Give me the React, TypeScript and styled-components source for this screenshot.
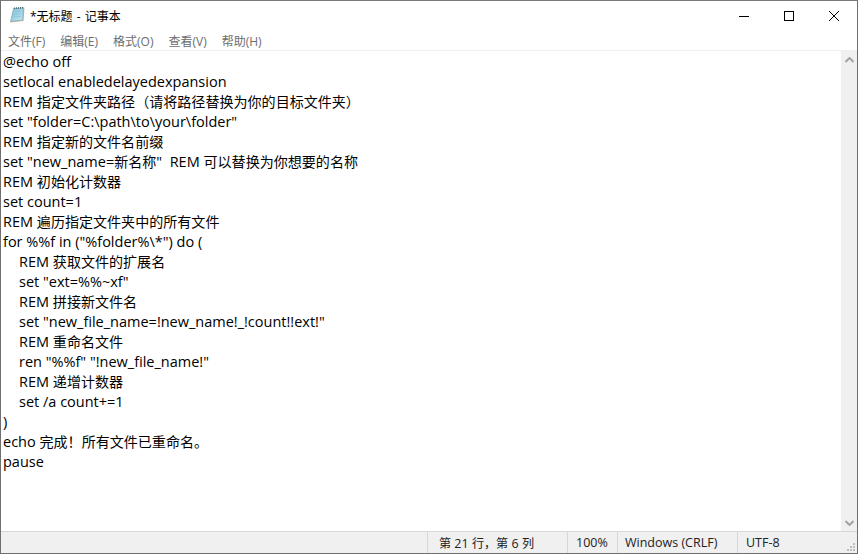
import React from "react";
import styled, { createGlobalStyle } from "styled-components";

const Global = createGlobalStyle`
  html, body {
    margin: 0;
    padding: 0;
    background: #fff;
  }
`;

const Win = styled.div`
  width: 858px;
  height: 554px;
  box-sizing: border-box;
  border: 1px solid #6f6f6f;
  border-top-color: #7a7a7a;
  background: #fff;
  display: flex;
  flex-direction: column;
  overflow: hidden;
  font-family: "Open Sans", "Noto Sans CJK SC", sans-serif;
`;

const TitleBar = styled.div`
  height: 30px;
  display: flex;
  align-items: center;
  padding: 0 1px 0 8px;
  flex: none;
`;

const AppIcon = styled.svg`
  margin-bottom: 2px;
  flex: none;
`;

const Title = styled.div`
  font-size: 12px;
  word-spacing: 1px;
  color: #000;
  margin-left: 5px;
  flex: 1;
`;

const WinBtn = styled.div`
  width: 45px;
  height: 30px;
  display: flex;
  align-items: center;
  justify-content: center;
`;

const MenuBar = styled.div`
  height: 19px;
  display: flex;
  align-items: center;
  padding-left: 7px;
  gap: 15px;
  flex: none;
  border-bottom: 1px solid #f0f0f0;
`;

const MenuItem = styled.span`
  font-size: 12px;
  color: #6d6d6d;
`;

const Body = styled.div`
  flex: 1;
  display: flex;
  min-height: 0;
`;

const Editor = styled.div`
  flex: 1;
  padding: 1px 0 0 2px;
  font-size: 14.5px;
  line-height: 20px;
  color: #000;
  white-space: pre;
`;

const Line = styled.div<{ $indent?: boolean }>`
  height: 20px;
  padding-left: ${(p) => (p.$indent ? 16 : 0)}px;
`;

const Cjk = styled.span`
  font-size: 0.97em;
`;

const ScrollBar = styled.div`
  width: 16px;
  background: #f0f0f0;
  display: flex;
  flex-direction: column;
  justify-content: space-between;
  flex: none;
`;

const ScrollBtn = styled.div`
  height: 17px;
  display: flex;
  align-items: center;
  justify-content: center;
`;

const StatusBar = styled.div`
  height: 22px;
  box-sizing: border-box;
  flex: none;
  display: flex;
  background: #f0f0f0;
  border-top: 1px solid #d7d7d7;
  font-size: 12.5px;
  color: #222;
  position: relative;
`;

const StatusSpacer = styled.div`
  flex: 1;
`;

const StatusCell = styled.div<{ $w: number; $pad: number }>`
  width: ${(p) => p.$w}px;
  box-sizing: border-box;
  padding-left: ${(p) => p.$pad}px;
  border-left: 1px solid #d7d7d7;
  display: flex;
  align-items: center;
  white-space: pre;
`;

const Grip = styled.svg`
  position: absolute;
  right: 2px;
  bottom: 2px;
`;

// the CJK glyphs sit a little smaller than the latin ones in the original
const Mixed = ({ text }: { text: string }) => (
  <span>
    {text.split(/([\u3000-\u303f\u4e00-\u9fff\uff00-\uffef]+)/).map((part, i) =>
      i % 2 ? <Cjk key={i}>{part}</Cjk> : part
    )}
  </span>
);

const lines: [string, boolean?][] = [
  ["@echo off"],
  ["setlocal enabledelayedexpansion"],
  ["REM 指定文件夹路径（请将路径替换为你的目标文件夹）"],
  ['set "folder=C:\\path\\to\\your\\folder"'],
  ["REM 指定新的文件名前缀"],
  ['set "new_name=新名称"  REM 可以替换为你想要的名称'],
  ["REM 初始化计数器"],
  ["set count=1"],
  ["REM 遍历指定文件夹中的所有文件"],
  ['for %%f in ("%folder%\\*") do ('],
  ["REM 获取文件的扩展名", true],
  ['set "ext=%%~xf"', true],
  ["REM 拼接新文件名", true],
  ['set "new_file_name=!new_name!_!count!!ext!"', true],
  ["REM 重命名文件", true],
  ['ren "%%f" "!new_file_name!"', true],
  ["REM 递增计数器", true],
  ["set /a count+=1", true],
  [")"],
  ["echo 完成！所有文件已重命名。"],
  ["pause"],
];

const menus = ["文件(F)", "编辑(E)", "格式(O)", "查看(V)", "帮助(H)"];

const NotepadIcon = () => (
  <AppIcon width="16" height="16" viewBox="0 0 16 16">
    <defs>
      <linearGradient id="page" x1="0" y1="0" x2="1" y2="1">
        <stop offset="0" stopColor="#7cc0da" />
        <stop offset="1" stopColor="#c4e6f1" />
      </linearGradient>
    </defs>
    <path d="M4.5 1.5L15.5 0.5L14.5 14L1 15.5Z" fill="#c9b48c" />
    <path d="M4.5 1.5L14.5 1L13.6 13.2L1.6 14.4Z" fill="url(#page)" stroke="#6aa3bd" strokeWidth="0.5" />
    <path d="M5 1.2L14.6 0.6" stroke="#3d5a68" strokeWidth="1.4" strokeDasharray="1 1" />
    <path d="M4.4 5L12.6 4.4M4 7.5L12.4 6.9M3.6 10L12.2 9.4" stroke="#8fc0d4" strokeWidth="0.7" />
  </AppIcon>
);

export default function App() {
  return (
    <Win>
      <Global />
      <TitleBar>
        <NotepadIcon />
        <Title>*无标题 - 记事本</Title>
        <WinBtn>
          <svg width="10" height="10" viewBox="0 0 10 10">
            <path d="M0 5.5H10" stroke="#000" />
          </svg>
        </WinBtn>
        <WinBtn>
          <svg width="10" height="10" viewBox="0 0 10 10">
            <rect x="0.5" y="0.5" width="9" height="9" fill="none" stroke="#000" />
          </svg>
        </WinBtn>
        <WinBtn>
          <svg width="10" height="10" viewBox="0 0 10 10">
            <path d="M0 0L10 10M10 0L0 10" stroke="#000" />
          </svg>
        </WinBtn>
      </TitleBar>
      <MenuBar>
        {menus.map((m) => (
          <MenuItem key={m}>{m}</MenuItem>
        ))}
      </MenuBar>
      <Body>
        <Editor>
          {lines.map(([text, indent], i) => (
            <Line key={i} $indent={indent}>
              <Mixed text={text} />
            </Line>
          ))}
        </Editor>
        <ScrollBar>
          <ScrollBtn>
            <svg width="9" height="6" viewBox="0 0 9 6">
              <path d="M0.5 5L4.5 1L8.5 5" fill="none" stroke="#a3a3a3" strokeWidth="2" />
            </svg>
          </ScrollBtn>
          <ScrollBtn>
            <svg width="9" height="6" viewBox="0 0 9 6">
              <path d="M0.5 1L4.5 5L8.5 1" fill="none" stroke="#a3a3a3" strokeWidth="2" />
            </svg>
          </ScrollBtn>
        </ScrollBar>
      </Body>
      <StatusBar>
        <StatusSpacer />
        <StatusCell $w={140} $pad={11}>
          <Mixed text="第 21 行，第 6 列" />
        </StatusCell>
        <StatusCell $w={50} $pad={8}>100%</StatusCell>
        <StatusCell $w={120} $pad={7}>Windows (CRLF)</StatusCell>
        <StatusCell $w={120} $pad={8}>UTF-8</StatusCell>
        <Grip width="8" height="8" viewBox="0 0 8 8">
          <path d="M6 0h2v2H6zM3 3h2v2H3zM6 3h2v2H6zM0 6h2v2H0zM3 6h2v2H3zM6 6h2v2H6z" fill="#bdbdbd" />
        </Grip>
      </StatusBar>
    </Win>
  );
}
